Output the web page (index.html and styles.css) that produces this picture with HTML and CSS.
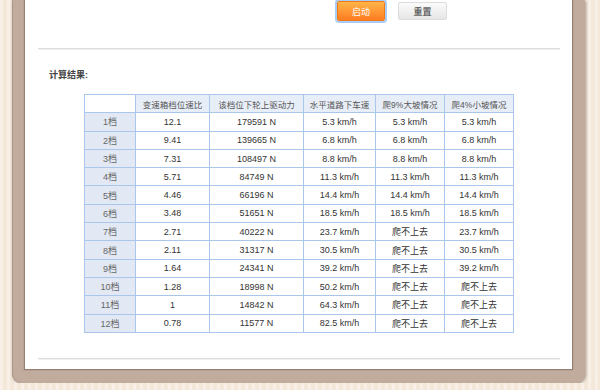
FILE: index.html
```html
<!DOCTYPE html>
<html lang="zh-CN">
<head>
  <meta charset="UTF-8">
  <title>计算结果</title>
  <link rel="stylesheet" href="styles.css">
</head>
<body>
  <div class="frame">
    <div class="panel">
      <div class="acciones">
        <button class="btn-start" type="button">启动</button>
        <button class="btn-reset" type="button">重置</button>
      </div>
      <div class="linea"></div>

      <div class="resultado">
        <p class="titulo">计算结果:</p>
        <table class="tabla">
          <tr class="cabecera">
            <th class="esquina"></th>
            <th>变速箱档位速比</th>
            <th>该档位下轮上驱动力</th>
            <th>水平道路下车速</th>
            <th>爬9%大坡情况</th>
            <th>爬4%小坡情况</th>
          </tr>
          <tr><td class="marcha">1档</td><td>12.1</td><td>179591 N</td><td>5.3 km/h</td><td>5.3 km/h</td><td>5.3 km/h</td></tr>
          <tr><td class="marcha">2档</td><td>9.41</td><td>139665 N</td><td>6.8 km/h</td><td>6.8 km/h</td><td>6.8 km/h</td></tr>
          <tr><td class="marcha">3档</td><td>7.31</td><td>108497 N</td><td>8.8 km/h</td><td>8.8 km/h</td><td>8.8 km/h</td></tr>
          <tr><td class="marcha">4档</td><td>5.71</td><td>84749 N</td><td>11.3 km/h</td><td>11.3 km/h</td><td>11.3 km/h</td></tr>
          <tr><td class="marcha">5档</td><td>4.46</td><td>66196 N</td><td>14.4 km/h</td><td>14.4 km/h</td><td>14.4 km/h</td></tr>
          <tr><td class="marcha">6档</td><td>3.48</td><td>51651 N</td><td>18.5 km/h</td><td>18.5 km/h</td><td>18.5 km/h</td></tr>
          <tr><td class="marcha">7档</td><td>2.71</td><td>40222 N</td><td>23.7 km/h</td><td>爬不上去</td><td>23.7 km/h</td></tr>
          <tr><td class="marcha">8档</td><td>2.11</td><td>31317 N</td><td>30.5 km/h</td><td>爬不上去</td><td>30.5 km/h</td></tr>
          <tr><td class="marcha">9档</td><td>1.64</td><td>24341 N</td><td>39.2 km/h</td><td>爬不上去</td><td>39.2 km/h</td></tr>
          <tr><td class="marcha">10档</td><td>1.28</td><td>18998 N</td><td>50.2 km/h</td><td>爬不上去</td><td>爬不上去</td></tr>
          <tr><td class="marcha">11档</td><td>1</td><td>14842 N</td><td>64.3 km/h</td><td>爬不上去</td><td>爬不上去</td></tr>
          <tr><td class="marcha">12档</td><td>0.78</td><td>11577 N</td><td>82.5 km/h</td><td>爬不上去</td><td>爬不上去</td></tr>
        </table>
      </div>

      <div class="linea"></div>
    </div>
  </div>
</body>
</html>
```

FILE: styles.css
```css
body {
  font-family: 'Liberation Sans', Arial, 'Noto Sans CJK SC', sans-serif;
  background: #f6ebde;
  background-image: repeating-linear-gradient(90deg, rgba(255,255,255,0.25) 0 3px, rgba(230,214,196,0.15) 3px 7px);
  margin: 0;
  padding: 0;
  overflow: hidden;
}

.frame {
  width: 547px;
  margin-left: 12px;
  padding: 0 13px 14px 13px;
  background: #c1ab9d;
  border-radius: 0 0 9px 9px;
  box-shadow: 1px 1px 3px rgba(90, 70, 55, 0.5), inset 1px 0 0 #ab978a;
}

.panel {
  background: white;
  padding: 0 12px 9px 13px;
  box-shadow: 0 0 1px 1px rgba(110, 92, 80, 0.55);
}

.acciones {
  display: flex;
  align-items: flex-start;
  padding-left: 299px;
  height: 48px;
}

.btn-start {
  width: 48px;
  height: 20px;
  margin-top: 1px;
  padding: 0;
  font-family: inherit;
  font-size: 9px;
  color: white;
  background: linear-gradient(#ffb548, #ff7c22);
  border: 1px solid #ef7a1d;
  border-radius: 2px;
  box-shadow: 0 0 0 2px #a7cdf6;
}

.btn-reset {
  width: 49px;
  height: 18px;
  margin-top: 2px;
  margin-left: 13px;
  padding: 0;
  font-family: inherit;
  font-size: 9px;
  font-weight: bold;
  color: #666;
  background: linear-gradient(#fbfbfb, #e6e6e6);
  border: 1px solid #dcdcdc;
  border-radius: 2px;
}

.linea {
  height: 1px;
  background: #dedede;
  border-bottom: 1px solid #f0f0f0;
}

.resultado {
  padding: 18px 0 0 11px;
  height: 290px;
}

.titulo {
  margin: 0 0 13px 0;
  font-size: 9px;
  font-weight: bold;
  color: #444;
}

.tabla {
  margin-left: 35px;
  border-collapse: collapse;
  font-size: 9px;
  color: #333;
}

.tabla th,
.tabla td {
  border: 1px solid #aac6ea;
  height: 17.3px;
  padding: 0;
  text-align: center;
}

.tabla th {
  font-size: 8.5px;
  font-weight: normal;
  color: #555;
  background: #e8eef7;
}

.tabla th.esquina {
  background: white;
}

.tabla th:nth-child(1) { width: 50px; }
.tabla th:nth-child(2) { width: 73px; }
.tabla th:nth-child(3) { width: 93px; }
.tabla th:nth-child(4) { width: 71px; }
.tabla th:nth-child(5) { width: 68px; }
.tabla th:nth-child(6) { width: 68px; }

.marcha {
  color: #666;
  background: #e2e9f4;
}
```
